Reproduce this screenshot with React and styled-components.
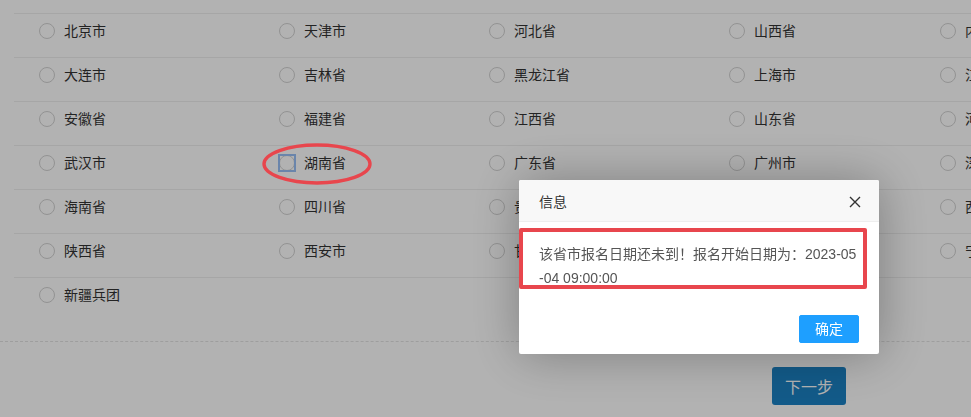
import React from "react";
import styled, { createGlobalStyle } from "styled-components";

const Global = createGlobalStyle`
  html, body {
    margin: 0;
    padding: 0;
    background: #fff;
    overflow: hidden;
  }
  body {
    font-family: "Liberation Sans", "Noto Sans CJK SC", sans-serif;
    color: #333;
  }
  * { box-sizing: border-box; }
`;

const Page = styled.div`
  padding-top: 13px;
  width: 1200px;
`;

const OptionList = styled.div`
  margin-left: 14px;
  padding-bottom: 20px;
`;

const Row = styled.div`
  display: grid;
  grid-template-columns: 240px 210px 240px 211px 240px;
  height: 44px;
  padding: 9px 0 0 25px;
  border-top: 1px solid #eee;
`;

const Option = styled.label`
  display: flex;
  align-items: center;
  gap: 9px;
  height: 16px;
  font-size: 14px;
  line-height: 16px;
  color: #333;
  white-space: nowrap;
`;

const RadioBox = styled.span`
  flex: none;
  width: 16px;
  height: 16px;
  display: flex;
  outline: ${(p) => (p.$focused ? "2px solid #98bff5" : "none")};
  outline-offset: -1px;
`;

const Circle = styled.span`
  width: 16px;
  height: 16px;
  border: 1px solid #d2d2d2;
  border-radius: 50%;
  background: #fff;
`;

const Divider = styled.div`
  border-top: 1px dashed #e3e3e3;
`;

const Footer = styled.div`
  display: flex;
  padding: 25px 0 0 772px;
`;

const NextButton = styled.button`
  width: 74px;
  height: 38px;
  border: none;
  border-radius: 3px;
  background: #1b82c4;
  color: #fff;
  font-family: inherit;
  font-size: 16px;
  padding: 0;
`;

const Shade = styled.div`
  position: fixed;
  inset: 0;
  background: rgba(0, 0, 0, 0.3);
  z-index: 10;
`;

const Dialog = styled.div`
  position: fixed;
  left: 519px;
  top: 180px;
  width: 360px;
  background: #fff;
  border-radius: 2px;
  box-shadow: 1px 1px 50px rgba(0, 0, 0, 0.3);
  z-index: 20;
`;

const TitleBar = styled.div`
  display: flex;
  align-items: center;
  justify-content: space-between;
  height: 42px;
  padding: 0 18px 0 20px;
  background: #f8f8f8;
  border-bottom: 1px solid #eee;
  border-radius: 2px 2px 0 0;
  font-size: 14px;
  color: #333;
`;

const CloseButton = styled.span`
  display: flex;
  width: 12px;
  height: 12px;
  margin-top: 2px;
`;

const Content = styled.div`
  padding: 20px;
  line-height: 24px;
  font-size: 14px;
  color: #555;
  word-break: break-all;
`;

const ButtonBar = styled.div`
  display: flex;
  justify-content: flex-end;
  padding: 5px 20px 11px;
`;

const OkButton = styled.button`
  height: 28px;
  padding: 0 15px;
  border: 1px solid #1e9fff;
  border-radius: 2px;
  background: #1e9fff;
  color: #fff;
  font-family: inherit;
  font-size: 14px;
  line-height: 26px;
`;

const EllipseMark = styled.svg`
  position: fixed;
  left: 262px;
  top: 143px;
  z-index: 30;
`;

const RectMark = styled.div`
  position: fixed;
  left: 519px;
  top: 228px;
  width: 348px;
  height: 61px;
  border: 4px solid #e8464d;
  border-radius: 2px;
  z-index: 30;
`;

const rows = [
  ["北京市", "天津市", "河北省", "山西省", "内蒙古"],
  ["大连市", "吉林省", "黑龙江省", "上海市", "江苏省"],
  ["安徽省", "福建省", "江西省", "山东省", "河南省"],
  ["武汉市", "湖南省", "广东省", "广州市", "深圳市"],
  ["海南省", "四川省", "贵州省", "云南省", "西藏"],
  ["陕西省", "西安市", "甘肃省", "青海省", "宁夏"],
  ["新疆兵团"],
];

export default function App() {
  return (
    <>
      <Global />
      <Page>
        <OptionList>
          {rows.map((row, i) => (
            <Row key={i}>
              {row.map((name) => (
                <Option key={name}>
                  <RadioBox $focused={name === "湖南省"}>
                    <Circle />
                  </RadioBox>
                  {name}
                </Option>
              ))}
            </Row>
          ))}
        </OptionList>
        <Divider />
        <Footer>
          <NextButton>下一步</NextButton>
        </Footer>
      </Page>
      <Shade />
      <Dialog>
        <TitleBar>
          信息
          <CloseButton>
            <svg width="12" height="12" viewBox="0 0 12 12">
              <path d="M1 1L11 11M11 1L1 11" stroke="#333" strokeWidth="1.4" fill="none" />
            </svg>
          </CloseButton>
        </TitleBar>
        <Content>该省市报名日期还未到！报名开始日期为：2023-05-04 09:00:00</Content>
        <ButtonBar>
          <OkButton>确定</OkButton>
        </ButtonBar>
      </Dialog>
      <EllipseMark width="110" height="42" viewBox="0 0 110 42">
        <ellipse cx="55" cy="21" rx="53" ry="19" fill="none" stroke="#e8464d" strokeWidth="3.4" />
      </EllipseMark>
      <RectMark />
    </>
  );
}
